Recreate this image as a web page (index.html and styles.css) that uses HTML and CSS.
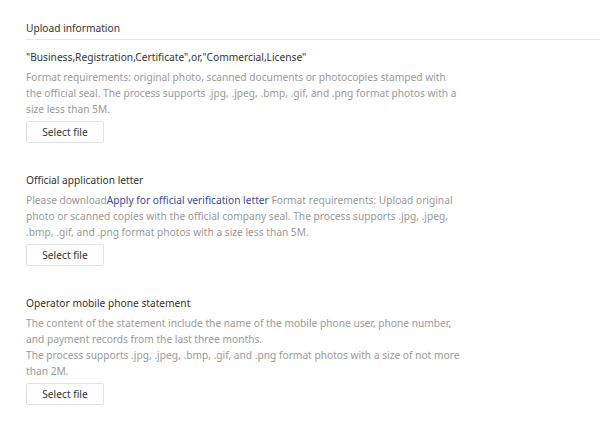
FILE: index.html
```html
<!DOCTYPE html>
<html>
<head>
<meta charset="utf-8">
<link rel="stylesheet" href="styles.css">
</head>
<body>
<div class="page">
  <div class="heading">Upload information</div>
  <div class="section first">
    <div class="label">"Business,Registration,Certificate",or,"Commercial,License"</div>
    <div class="desc">Format requirements: original photo, scanned documents or photocopies stamped with the official seal. The process supports .jpg, .jpeg, .bmp, .gif, and .png format photos with a size less than 5M.</div>
    <button class="btn">Select file</button>
  </div>
  <div class="section">
    <div class="label">Official application letter</div>
    <div class="desc">Please download<a class="link">Apply for official verification letter</a> Format requirements: Upload original photo or scanned copies with the official company seal. The process supports .jpg, .jpeg, .bmp, .gif, and .png format photos with a size less than 5M.</div>
    <button class="btn">Select file</button>
  </div>
  <div class="section">
    <div class="label">Operator mobile phone statement</div>
    <div class="desc">The content of the statement include the name of the mobile phone user, phone number, and payment records from the last three months.<br>The process supports .jpg, .jpeg, .bmp, .gif, and .png format photos with a size of not more than 2M.</div>
    <button class="btn">Select file</button>
  </div>
</div>
</body>
</html>
```
FILE: styles.css
```css
html, body {
  margin: 0;
  padding: 0;
  background: #fff;
}
body {
  font-family: "Noto Sans", "Open Sans", sans-serif;
  font-size: 10.2px;
  color: #333;
}
.page {
  padding: 20px 0 0 26px;
}
.heading {
  line-height: 16px;
  color: #333;
  padding-bottom: 3px;
  border-bottom: 1px solid #e8e8e8;
}
.section {
  margin-top: 29px;
  width: 434px;
}
.section.first {
  margin-top: 9px;
}
.label {
  line-height: 16px;
  color: #333;
  white-space: nowrap;
}
.desc {
  margin-top: 4px;
  line-height: 16px;
  color: #999;
}
.link {
  color: #3a4a9a;
}
.btn {
  display: block;
  margin-top: 4px;
  width: 78px;
  height: 22px;
  padding: 0;
  background: #fff;
  border: 1px solid #e3e3e3;
  border-radius: 2px;
  font-family: inherit;
  font-size: 10.2px;
  color: #333;
}
```
